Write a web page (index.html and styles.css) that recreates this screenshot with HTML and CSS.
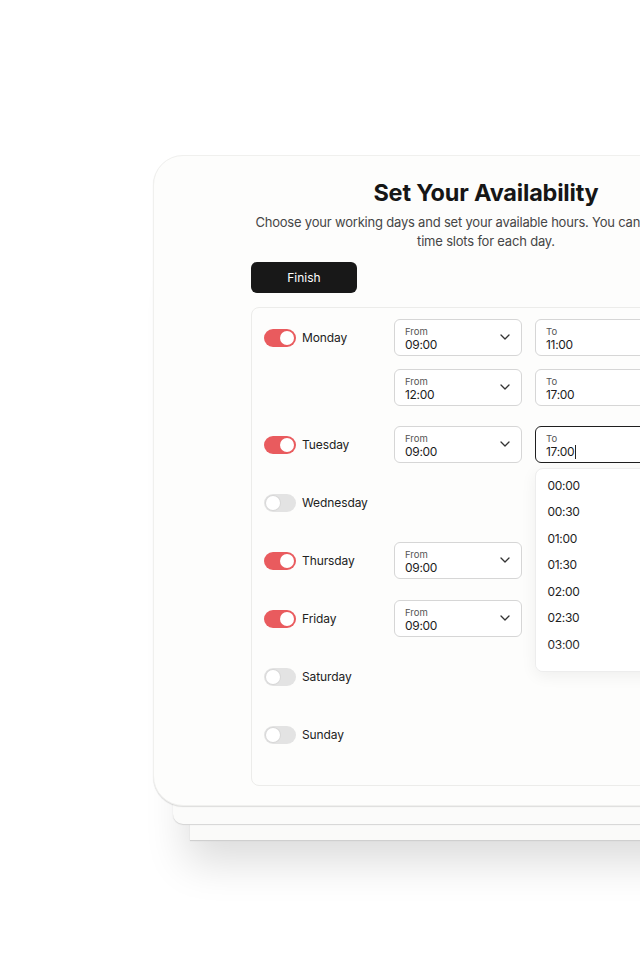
FILE: index.html
```html
<!DOCTYPE html>
<html lang="en">
<head>
    <meta charset="UTF-8">
    <meta name="viewport" content="width=device-width, initial-scale=1.0">
    <title>Set Your Availability</title>
    <link rel="stylesheet" href="styles.css">
</head>
<body>

<div class="stage">
    <div class="card">
        <header class="intro">
            <h1>Set Your Availability</h1>
            <p>Choose your working days and set your available hours. You can add multiple<br>time slots for each day.</p>
        </header>

        <button class="finish">Finish</button>

        <div class="days">
            <!-- Monday -->
            <div class="day">
                <div class="day-name"><span class="toggle on"></span>Monday</div>
                <div class="slots">
                    <div class="slot">
                        <div class="field"><small>From</small><span>09:00</span>
                            <svg class="chevron" width="10" height="6" viewBox="0 0 10 6"><path d="M1 1l4 4 4-4" fill="none" stroke="#333" stroke-width="1.3" stroke-linecap="round" stroke-linejoin="round"/></svg>
                        </div>
                        <div class="field"><small>To</small><span>11:00</span></div>
                    </div>
                    <div class="slot">
                        <div class="field"><small>From</small><span>12:00</span>
                            <svg class="chevron" width="10" height="6" viewBox="0 0 10 6"><path d="M1 1l4 4 4-4" fill="none" stroke="#333" stroke-width="1.3" stroke-linecap="round" stroke-linejoin="round"/></svg>
                        </div>
                        <div class="field"><small>To</small><span>17:00</span></div>
                    </div>
                </div>
            </div>

            <!-- Tuesday -->
            <div class="day">
                <div class="day-name"><span class="toggle on"></span>Tuesday</div>
                <div class="slots">
                    <div class="slot">
                        <div class="field"><small>From</small><span>09:00</span>
                            <svg class="chevron" width="10" height="6" viewBox="0 0 10 6"><path d="M1 1l4 4 4-4" fill="none" stroke="#333" stroke-width="1.3" stroke-linecap="round" stroke-linejoin="round"/></svg>
                        </div>
                        <div class="field active"><small>To</small><span class="typing">17:00</span>
                            <ul class="menu">
                                <li>00:00</li>
                                <li>00:30</li>
                                <li>01:00</li>
                                <li>01:30</li>
                                <li>02:00</li>
                                <li>02:30</li>
                                <li>03:00</li>
                                <li>03:30</li>
                            </ul>
                        </div>
                    </div>
                </div>
            </div>

            <div class="day">
                <div class="day-name"><span class="toggle"></span>Wednesday</div>
            </div>

            <div class="day">
                <div class="day-name"><span class="toggle on"></span>Thursday</div>
                <div class="slots">
                    <div class="slot">
                        <div class="field"><small>From</small><span>09:00</span>
                            <svg class="chevron" width="10" height="6" viewBox="0 0 10 6"><path d="M1 1l4 4 4-4" fill="none" stroke="#333" stroke-width="1.3" stroke-linecap="round" stroke-linejoin="round"/></svg>
                        </div>
                        <div class="field"><small>To</small><span>17:00</span></div>
                    </div>
                </div>
            </div>

            <div class="day">
                <div class="day-name"><span class="toggle on"></span>Friday</div>
                <div class="slots">
                    <div class="slot">
                        <div class="field"><small>From</small><span>09:00</span>
                            <svg class="chevron" width="10" height="6" viewBox="0 0 10 6"><path d="M1 1l4 4 4-4" fill="none" stroke="#333" stroke-width="1.3" stroke-linecap="round" stroke-linejoin="round"/></svg>
                        </div>
                        <div class="field"><small>To</small><span>17:00</span></div>
                    </div>
                </div>
            </div>

            <div class="day">
                <div class="day-name"><span class="toggle"></span>Saturday</div>
            </div>

            <div class="day">
                <div class="day-name"><span class="toggle"></span>Sunday</div>
            </div>
        </div>
    </div>
</div>

</body>
</html>
```

FILE: styles.css
```css
html, body {
    overflow: hidden;
}
body {
    margin: 0;
    background-color: #fff;
    font-family: Inter, "Noto Sans", sans-serif;
    color: #1c1c1c;
}
.stage {
    padding: 155px 0 0 153px;
    height: 960px;
    box-sizing: border-box;
}
.card {
    width: 666px;
    box-sizing: border-box;
    padding: 22px 97px 19px;
    background-color: #fdfdfc;
    border: 1px solid #f0f0ee;
    border-radius: 30px;
    box-shadow:
        0 1px 1px rgba(0, 0, 0, 0.12),
        0 38px 0 -20px #fbfbfa,
        0 39px 1px -20px #d4d4d4,
        0 71px 0 -37px #fafaf9,
        0 72px 1px -37px #cfcfcf,
        0 90px 40px -34px rgba(0, 0, 0, 0.14);
}
.intro {
    text-align: center;
}
.intro h1 {
    margin: 0;
    font-size: 23.5px;
    line-height: 30px;
    font-weight: 700;
    letter-spacing: -0.2px;
    color: #161616;
}
.intro p {
    margin: 5px 0 0;
    font-size: 13px;
    line-height: 19px;
    letter-spacing: -0.2px;
    color: #464646;
}
.finish {
    display: block;
    margin-top: 11px;
    width: 106px;
    height: 31px;
    border: none;
    border-radius: 6px;
    background-color: #181818;
    color: #fff;
    font-family: inherit;
    font-size: 12px;
}
.days {
    margin-top: 14px;
    padding: 11px 12px 31px;
    border: 1px solid #ececea;
    border-radius: 8px;
    background-color: #fdfdfc;
    display: flex;
    flex-direction: column;
    gap: 20px;
}
.day {
    display: flex;
    min-height: 38px;
}
.day-name {
    width: 130px;
    height: 37px;
    flex-shrink: 0;
    display: flex;
    align-items: center;
    gap: 6px;
    font-size: 12px;
    letter-spacing: -0.1px;
    color: #222;
}
.toggle {
    position: relative;
    width: 32px;
    height: 18px;
    border-radius: 9px;
    background-color: #e3e3e3;
}
.toggle::after {
    content: "";
    position: absolute;
    top: 2px;
    left: 2px;
    width: 14px;
    height: 14px;
    border-radius: 50%;
    background-color: #fff;
    box-shadow: 0 0 0 1px #d8d8d8;
}
.toggle.on {
    background-color: #e95b5e;
}
.toggle.on::after {
    left: 16px;
    box-shadow: none;
}
.slots {
    display: flex;
    flex-direction: column;
    gap: 13px;
}
.slot {
    display: flex;
    gap: 13px;
}
.field {
    position: relative;
    width: 128px;
    height: 37px;
    box-sizing: border-box;
    padding: 6px 10px 0;
    border: 1.5px solid #d6d6d6;
    border-radius: 6px;
    background-color: #fff;
    display: flex;
    flex-direction: column;
}
.field small {
    font-size: 9.5px;
    line-height: 12px;
    color: #555;
}
.field span {
    font-size: 12px;
    line-height: 14px;
    letter-spacing: -0.3px;
    color: #1c1c1c;
}
.field.active {
    border-color: #1f1f1f;
}
.typing {
    align-self: flex-start;
    border-right: 1px solid #222;
    padding-right: 1px;
}
.chevron {
    position: absolute;
    right: 11px;
    top: 14px;
}
.menu {
    position: absolute;
    top: 40.5px;
    left: -1.5px;
    width: 128px;
    height: 204px;
    box-sizing: border-box;
    margin: 0;
    padding: 4px 0 0;
    list-style: none;
    overflow: hidden;
    background-color: #fff;
    border: 1px solid #ededed;
    border-radius: 8px;
    box-shadow: 0 4px 16px rgba(0, 0, 0, 0.06);
    z-index: 2;
}
.menu::after {
    content: "";
    position: absolute;
    left: 0;
    right: 0;
    bottom: 0;
    height: 26px;
    background: linear-gradient(rgba(255, 255, 255, 0), #fff 75%);
}
.menu li {
    height: 26.5px;
    line-height: 26.5px;
    padding-left: 12px;
    font-size: 12px;
    letter-spacing: -0.3px;
    color: #1e1e1e;
}
```
